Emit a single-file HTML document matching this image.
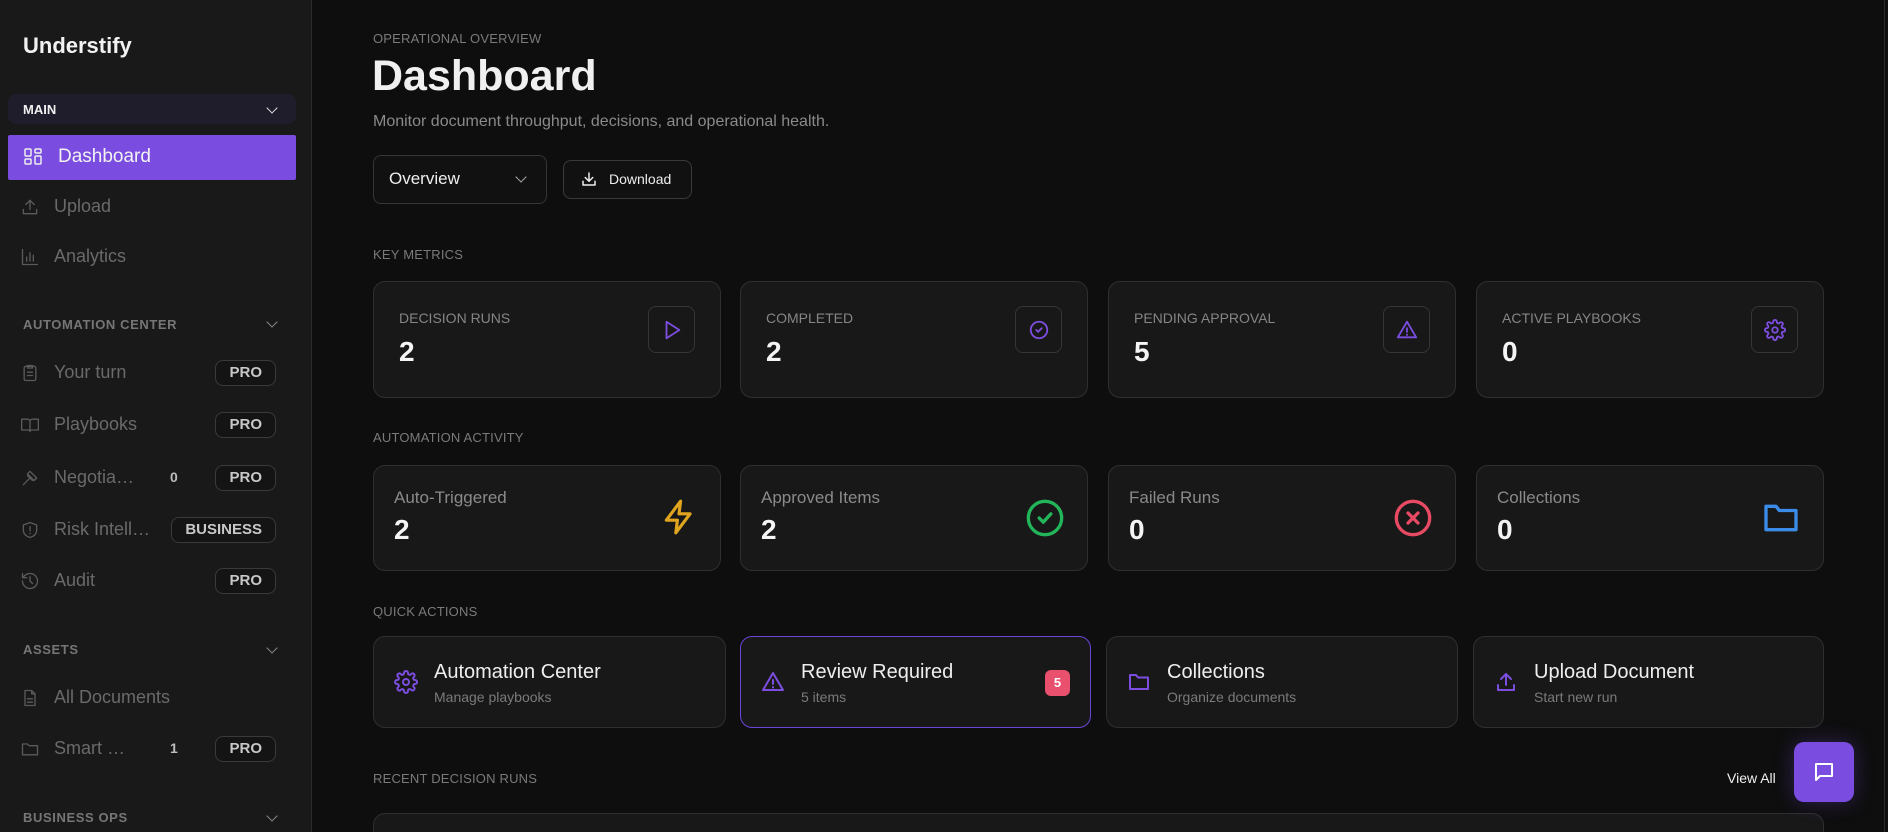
<!DOCTYPE html>
<html style="width:1888px;height:832px;overflow:hidden"><head><meta charset="utf-8">
<style>
*{box-sizing:border-box;margin:0;padding:0}
body{width:1888px;height:832px;overflow:hidden;background:#0e0e0e;font-family:"Liberation Sans",sans-serif;position:relative;color:#eee}
.a{position:absolute}
#sb{left:0;top:0;width:312px;height:832px;background:#191919;border-right:1px solid #2b2b2b}
.nav{position:absolute;left:20px;display:flex;align-items:center;color:#6a6a6a;font-size:18px}
.nav svg{width:20px;height:20px;margin-right:14px;stroke:#5a5a5a;fill:none;stroke-width:1.6;stroke-linecap:round;stroke-linejoin:round}
.pro{position:absolute;right:35px;height:26px;border:1px solid #3a3a3a;border-radius:8px;color:#c8c8c8;font-weight:bold;font-size:15px;line-height:24px;padding:0 13px;background:#141414}
.cnt{position:absolute;left:170px;color:#bdbdbd;font-weight:bold;font-size:14px}
.sec{position:absolute;left:23px;font-size:13px;font-weight:bold;letter-spacing:.6px;color:#767676}
.chev{position:absolute;left:268px;width:8px;height:8px;border-right:1.5px solid #888;border-bottom:1.5px solid #888;transform:rotate(45deg)}
.lbl{position:absolute;left:373px;font-size:13px;color:#7a7a7a;letter-spacing:.2px}
.card{position:absolute;background:#181818;border:1px solid #2f2f2f;border-radius:12px}
.card .t{position:absolute;left:25px;top:28px;font-size:14px;color:#858585}
.card .n{position:absolute;left:25px;top:54px;font-size:28px;font-weight:bold;color:#f4f4f4}
.ib{position:absolute;right:25px;top:24px;width:47px;height:47px;border:1px solid #353535;border-radius:8px;display:flex;align-items:center;justify-content:center}
.ib svg,.ic svg,.q svg{fill:none;stroke-width:2;stroke-linecap:round;stroke-linejoin:round}
.card .t2{position:absolute;left:20px;top:22px;font-size:17px;color:#8a8a8a}
.card .n2{position:absolute;left:20px;top:48px;font-size:28px;font-weight:bold;color:#f4f4f4}
.ic{position:absolute;right:22px;top:32px}
.q .h{position:absolute;left:60px;top:24px;font-size:20px;color:#eee}
.q .s{position:absolute;left:60px;top:52px;font-size:14px;color:#7a7a7a}
.q svg{position:absolute;left:20px;top:33px}
</style></head><body>
<div id="sb" class="a">
<div class="a" style="left:23px;top:33px;font-size:22px;font-weight:bold;color:#f2f2f2">Understify</div>
<div class="a" style="left:8px;top:94px;width:288px;height:30px;background:#1f1d2b;border-radius:8px"></div>
<div class="a" style="left:23px;top:102px;font-size:13px;font-weight:bold;color:#f0f0f0">MAIN</div>
<div class="chev" style="top:104px;border-color:#ddd"></div>
<div class="a" style="left:8px;top:135px;width:288px;height:45px;background:#7a4ce0;border-radius:2px"></div>
<svg class="a" style="left:24px;top:148px" width="18" height="18" viewBox="0 0 18 18" fill="none" stroke="#eee" stroke-width="1.5"><rect x="1" y="1" width="6" height="7" rx="1"/><rect x="11" y="1" width="6" height="4" rx="1"/><rect x="1" y="11" width="6" height="5" rx="1"/><rect x="11" y="8" width="6" height="8" rx="1"/></svg>
<div class="a" style="left:58px;top:146px;font-size:19px;color:#f2f2f2">Dashboard</div>
<div class="nav" style="top:196px"><svg viewBox="0 0 24 24"><path d="M4 15v5h16v-5M12 15V4M7 9l5-5 5 5"/></svg>Upload</div>
<div class="nav" style="top:246px"><svg viewBox="0 0 24 24"><path d="M3 3v18h18M8 17v-5M12 17V7M16 17v-7"/></svg>Analytics</div>
<div class="sec" style="top:317px">AUTOMATION CENTER</div><div class="chev" style="top:318px"></div>
<div class="nav" style="top:362px"><svg viewBox="0 0 24 24"><rect x="5" y="4" width="14" height="17" rx="2"/><path d="M9 3h6v3H9zM9 11h6M9 15h6"/></svg>Your turn</div><div class="pro" style="top:360px">PRO</div>
<div class="nav" style="top:414px"><svg viewBox="0 0 24 24"><path d="M2 5h7a3 3 0 0 1 3 3v12a2 2 0 0 0-2-2H2zM22 5h-7a3 3 0 0 0-3 3v12a2 2 0 0 1 2-2h8z"/></svg>Playbooks</div><div class="pro" style="top:412px">PRO</div>
<div class="nav" style="top:467px"><svg viewBox="0 0 24 24"><path d="M14 6l4 4M4 20l7-7M9 9l6 6M12 4l8 8-3 3-8-8z"/></svg>Negotia…</div><div class="cnt" style="top:469px">0</div><div class="pro" style="top:465px">PRO</div>
<div class="nav" style="top:519px"><svg viewBox="0 0 24 24"><path d="M12 3l8 3v6c0 5-4 8-8 9-4-1-8-4-8-9V6zM12 8v5M12 16v.5"/></svg>Risk Intell…</div><div class="pro" style="top:517px">BUSINESS</div>
<div class="nav" style="top:570px"><svg viewBox="0 0 24 24"><path d="M3 12a9 9 0 1 0 3-6.7L3 8M3 3v5h5M12 7v5l3 3"/></svg>Audit</div><div class="pro" style="top:568px">PRO</div>
<div class="sec" style="top:642px">ASSETS</div><div class="chev" style="top:644px"></div>
<div class="nav" style="top:687px"><svg viewBox="0 0 24 24"><path d="M14 3H6v18h12V7zM14 3v4h4M9 13h6M9 17h6"/></svg>All Documents</div>
<div class="nav" style="top:738px"><svg viewBox="0 0 24 24"><path d="M3 6h6l2 2h10v11H3z"/></svg>Smart …</div><div class="cnt" style="top:740px">1</div><div class="pro" style="top:736px">PRO</div>
<div class="sec" style="top:810px">BUSINESS OPS</div><div class="chev" style="top:812px"></div>
</div>

<div class="lbl" style="top:31px">OPERATIONAL OVERVIEW</div>
<div class="a" style="left:372px;top:52px;font-size:43px;font-weight:bold;color:#f0f0f0">Dashboard</div>
<div class="a" style="left:373px;top:113px;font-size:16px;color:#8a8a8a">Monitor document throughput, decisions, and operational health.</div>
<div class="a" style="left:373px;top:155px;width:174px;height:49px;border:1px solid #353535;border-radius:8px;background:#111"></div>
<div class="a" style="left:389px;top:169px;font-size:17px;color:#eee">Overview</div>
<div class="chev" style="left:517px;top:173px;border-color:#aaa"></div>
<div class="a" style="left:563px;top:160px;width:129px;height:39px;border:1px solid #3a3a3a;border-radius:8px;background:#111"></div>
<svg class="a" style="left:580px;top:170px" width="18" height="18" viewBox="0 0 24 24" fill="none" stroke="#eee" stroke-width="2" stroke-linecap="round" stroke-linejoin="round"><path d="M4 15v5h16v-5M12 4v11M7 10l5 5 5-5"/></svg>
<div class="a" style="left:609px;top:171px;font-size:14px;color:#eee">Download</div>

<div class="lbl" style="top:247px">KEY METRICS</div>
<div class="card" style="left:373px;top:281px;width:348px;height:117px"><div class="t">DECISION RUNS</div><div class="n">2</div><div class="ib"><svg width="22" height="22" viewBox="0 0 24 24" stroke="#7c4ddf"><path d="M6 3l14 9-14 9z"/></svg></div></div>
<div class="card" style="left:740px;top:281px;width:348px;height:117px"><div class="t">COMPLETED</div><div class="n">2</div><div class="ib"><svg width="22" height="22" viewBox="0 0 24 24" stroke="#7c4ddf"><circle cx="12" cy="12" r="9"/><path d="M9 12l2 2 4-4"/></svg></div></div>
<div class="card" style="left:1108px;top:281px;width:348px;height:117px"><div class="t">PENDING APPROVAL</div><div class="n">5</div><div class="ib"><svg width="22" height="22" viewBox="0 0 24 24" stroke="#7c4ddf"><path d="M12 3L2 20h20zM12 10v4M12 17v.5"/></svg></div></div>
<div class="card" style="left:1476px;top:281px;width:348px;height:117px"><div class="t">ACTIVE PLAYBOOKS</div><div class="n">0</div><div class="ib"><svg width="22" height="22" viewBox="0 0 24 24" stroke="#7c4ddf"><circle cx="12" cy="12" r="3"/><path d="M19.4 15a1.7 1.7 0 0 0 .3 1.8l.1.1a2 2 0 1 1-2.8 2.8l-.1-.1a1.7 1.7 0 0 0-2.9 1.2V21a2 2 0 1 1-4 0v-.1a1.7 1.7 0 0 0-2.9-1.2l-.1.1a2 2 0 1 1-2.8-2.8l.1-.1A1.7 1.7 0 0 0 3 14H3a2 2 0 1 1 0-4h.1a1.7 1.7 0 0 0 1.2-2.9l-.1-.1A2 2 0 1 1 7 4.2l.1.1A1.7 1.7 0 0 0 10 3.1V3a2 2 0 1 1 4 0v.1a1.7 1.7 0 0 0 2.9 1.2l.1-.1a2 2 0 1 1 2.8 2.8l-.1.1A1.7 1.7 0 0 0 21 10h.1a2 2 0 1 1 0 4H21a1.7 1.7 0 0 0-1.6 1z"/></svg></div></div>

<div class="lbl" style="top:430px">AUTOMATION ACTIVITY</div>
<div class="card" style="left:373px;top:465px;width:348px;height:106px"><div class="t2">Auto-Triggered</div><div class="n2">2</div><div class="ic"><svg width="38" height="38" viewBox="0 0 24 24" stroke="#e0a41e"><path d="M13 2L4 14h7l-1 8 9-12h-7z"/></svg></div></div>
<div class="card" style="left:740px;top:465px;width:348px;height:106px"><div class="t2">Approved Items</div><div class="n2">2</div><div class="ic"><svg width="40" height="40" viewBox="0 0 24 24" stroke="#22b55a"><circle cx="12" cy="12" r="10"/><path d="M8.5 12l2.5 2.5 4.5-5"/></svg></div></div>
<div class="card" style="left:1108px;top:465px;width:348px;height:106px"><div class="t2">Failed Runs</div><div class="n2">0</div><div class="ic"><svg width="40" height="40" viewBox="0 0 24 24" stroke="#e84a64"><circle cx="12" cy="12" r="10"/><path d="M9 9l6 6M15 9l-6 6"/></svg></div></div>
<div class="card" style="left:1476px;top:465px;width:348px;height:106px"><div class="t2">Collections</div><div class="n2">0</div><div class="ic"><svg width="40" height="40" viewBox="0 0 24 24" stroke="#3b8ce8"><path d="M3 5h6l2 2.5h10V19H3z"/></svg></div></div>

<div class="lbl" style="top:604px">QUICK ACTIONS</div>
<div class="card q" style="left:373px;top:636px;width:353px;height:92px"><svg width="24" height="24" viewBox="0 0 24 24" stroke="#7c4ddf"><circle cx="12" cy="12" r="3"/><path d="M19.4 15a1.7 1.7 0 0 0 .3 1.8l.1.1a2 2 0 1 1-2.8 2.8l-.1-.1a1.7 1.7 0 0 0-2.9 1.2V21a2 2 0 1 1-4 0v-.1a1.7 1.7 0 0 0-2.9-1.2l-.1.1a2 2 0 1 1-2.8-2.8l.1-.1A1.7 1.7 0 0 0 3 14H3a2 2 0 1 1 0-4h.1a1.7 1.7 0 0 0 1.2-2.9l-.1-.1A2 2 0 1 1 7 4.2l.1.1A1.7 1.7 0 0 0 10 3.1V3a2 2 0 1 1 4 0v.1a1.7 1.7 0 0 0 2.9 1.2l.1-.1a2 2 0 1 1 2.8 2.8l-.1.1A1.7 1.7 0 0 0 21 10h.1a2 2 0 1 1 0 4H21a1.7 1.7 0 0 0-1.6 1z"/></svg><div class="h">Automation Center</div><div class="s">Manage playbooks</div></div>
<div class="card q" style="left:740px;top:636px;width:351px;height:92px;border-color:#6b45d8"><svg width="24" height="24" viewBox="0 0 24 24" stroke="#7c4ddf"><path d="M12 3L2 20h20zM12 10v4M12 17v.5"/></svg><div class="h">Review Required</div><div class="s">5 items</div><div class="a" style="right:20px;top:33px;width:25px;height:26px;background:#e8506e;border-radius:6px;color:#fff;font-weight:bold;font-size:13px;text-align:center;line-height:26px">5</div></div>
<div class="card q" style="left:1106px;top:636px;width:352px;height:92px"><svg width="24" height="24" viewBox="0 0 24 24" stroke="#7c4ddf"><path d="M3 5h6l2 2.5h10V19H3z"/></svg><div class="h">Collections</div><div class="s">Organize documents</div></div>
<div class="card q" style="left:1473px;top:636px;width:351px;height:92px"><svg width="24" height="24" viewBox="0 0 24 24" stroke="#7c4ddf"><path d="M4 15v5h16v-5M12 15V4M7 9l5-5 5 5"/></svg><div class="h">Upload Document</div><div class="s">Start new run</div></div>

<div class="lbl" style="top:771px">RECENT DECISION RUNS</div>
<div class="a" style="left:1727px;top:770px;font-size:14px;color:#f0f0f0">View All</div>
<div class="a" style="left:373px;top:813px;width:1451px;height:19px;background:#181818;border:1px solid #2f2f2f;border-bottom:none;border-radius:12px 12px 0 0"></div>
<div class="a" style="left:1794px;top:742px;width:60px;height:60px;background:#7a4ce0;border-radius:10px;box-shadow:0 0 20px rgba(122,76,224,.3)"></div>
<svg class="a" style="left:1812px;top:760px" width="24" height="24" viewBox="0 0 24 24" fill="none" stroke="#fff" stroke-width="2" stroke-linejoin="round"><path d="M4 4h16v12H8l-4 4z"/></svg>
<div class="a" style="left:1884px;top:0;width:1px;height:832px;background:#2a2a2a"></div>
</body></html>
